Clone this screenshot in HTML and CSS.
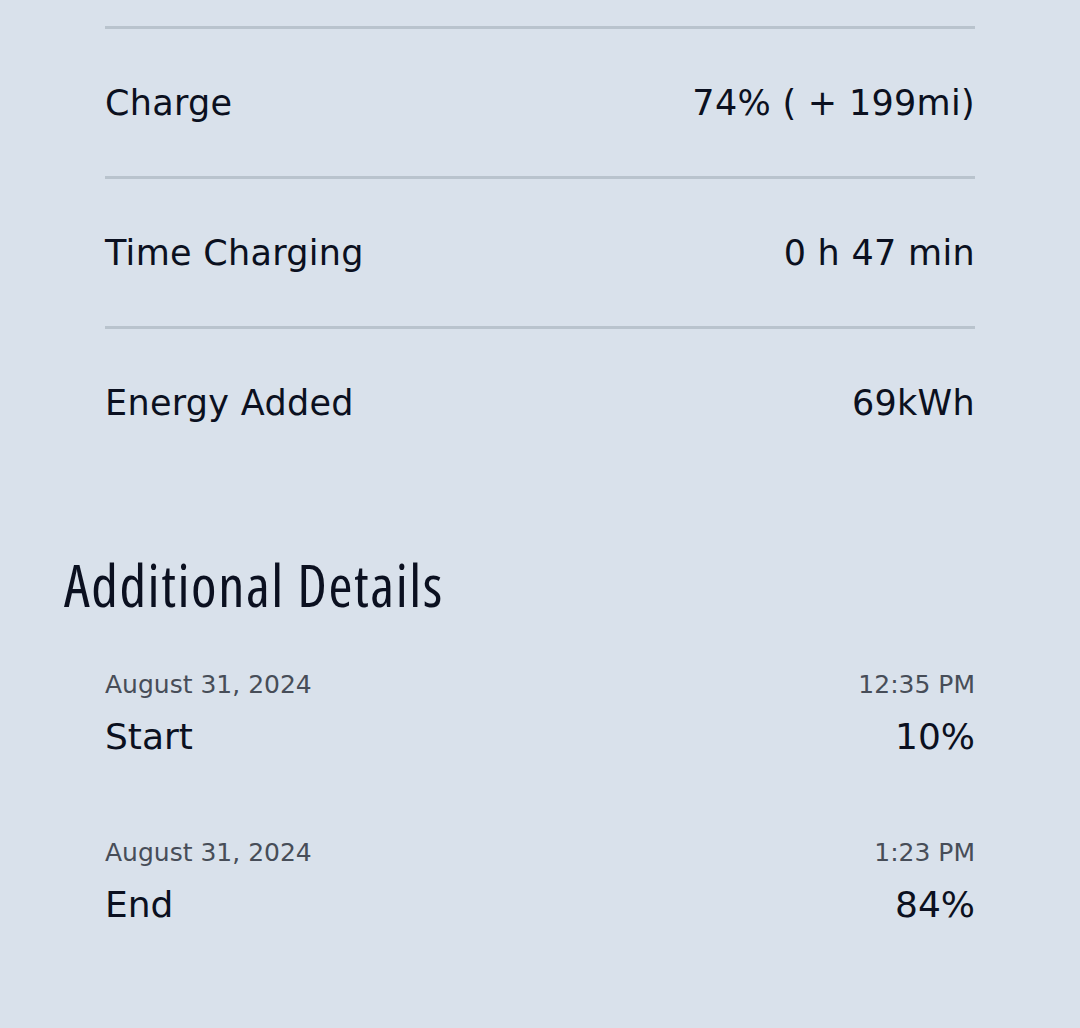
FILE: index.html
```html
<!DOCTYPE html>
<html lang="en">

<head>
    <meta charset="UTF-8">
    <meta name="viewport" content="width=device-width, initial-scale=1.0">
    <title>Charge Session</title>
    <link rel="stylesheet" href="styles.css">
</head>

<body>
    <div class="summary">
        <div class="row">
            <span>Charge</span>
            <span>74% ( + 199mi)</span>
        </div>
        <div class="row">
            <span>Time Charging</span>
            <span>0 h 47 min</span>
        </div>
        <div class="row">
            <span>Energy Added</span>
            <span>69kWh</span>
        </div>
    </div>

    <h2 class="section-title">Additional Details</h2>

    <div class="details">
        <div class="detail">
            <div class="detail-top">
                <span>August 31, 2024</span>
                <span>12:35 PM</span>
            </div>
            <div class="detail-main">
                <span>Start</span>
                <span>10%</span>
            </div>
        </div>
        <div class="detail">
            <div class="detail-top">
                <span>August 31, 2024</span>
                <span>1:23 PM</span>
            </div>
            <div class="detail-main">
                <span>End</span>
                <span>84%</span>
            </div>
        </div>
    </div>
</body>

</html>
```

FILE: styles.css
```css
body {
    font-family: "DejaVu Sans", "Open Sans", sans-serif;
    background-color: #d9e1eb;
    color: #0b1020;
    margin: 0;
    padding: 26px 0 0;
}

.summary {
    padding: 0 105px;
}

.row {
    display: flex;
    justify-content: space-between;
    align-items: center;
    height: 147px;
    border-top: 3px solid #b9c3cd;
    font-size: 35px;
    letter-spacing: 0.3px;
}

.section-title {
    margin: 0;
    padding: 74px 0 0 64px;
    font-family: "Open Sans", sans-serif;
    font-stretch: 75%;
    font-weight: 500;
    font-size: 58px;
    line-height: 70px;
    letter-spacing: 1.6px;
}

.details {
    padding: 47px 105px 0;
}

.detail {
    margin-bottom: 72px;
}

.detail-top {
    display: flex;
    justify-content: space-between;
    font-size: 25px;
    line-height: 36px;
    color: #474d58;
}

.detail-main {
    display: flex;
    justify-content: space-between;
    margin-top: 8px;
    font-size: 36px;
    line-height: 52px;
}
```
